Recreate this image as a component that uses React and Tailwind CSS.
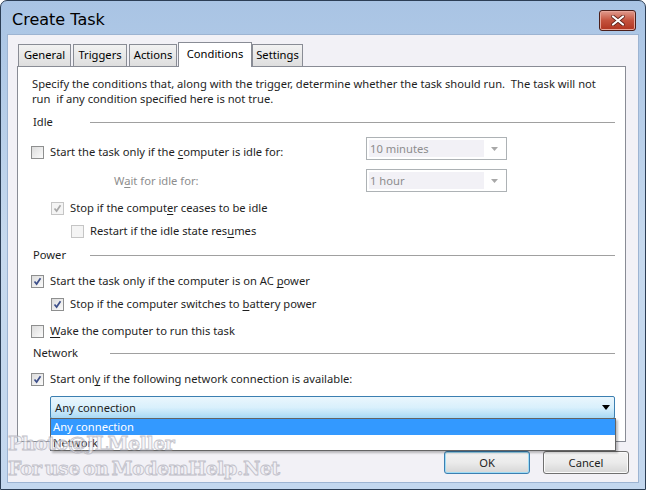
import React from 'react'

const ui = { fontFamily: '"Noto Sans", "Open Sans", sans-serif' }

function U({ children }) {
  return <span className="underline underline-offset-2">{children}</span>
}

function Check({ checked, disabled }) {
  return (
    <span className={`flex h-[13px] w-[13px] shrink-0 items-center justify-center border ${disabled ? 'border-[#c5c5c5] bg-[#f4f4f4]' : 'border-[#8e8f8f] bg-gradient-to-br from-[#dcdcdc] to-[#fbfbfb]'}`}>
      {checked && (
        <svg width="9" height="9" viewBox="0 0 9 9">
          <path d="M1.5 4.5 L3.6 7 L7.5 1.2" fill="none" stroke={disabled ? '#a8a8a8' : '#3d4f8a'} strokeWidth="1.7" />
        </svg>
      )}
    </span>
  )
}

// one checkbox line, fixed height so rows land where the dialog puts them
function Row({ indent = 'pl-[13px]', checked, disabled, children, className = '' }) {
  return (
    <div className={`flex h-[18px] shrink-0 items-center gap-[6px] ${indent} ${className}`}>
      <Check checked={checked} disabled={disabled} />
      <span className="text-[#1e1e1e]">{children}</span>
    </div>
  )
}

function Group({ title, line, className = '' }) {
  return (
    <div className={`flex h-[16px] shrink-0 items-center pl-[15px] pr-[10px] ${className}`}>
      <span className="text-[#1e1e1e]">{title}</span>
      <span className={`ml-auto h-px bg-[#a0a0a0] ${line}`} />
    </div>
  )
}

function GreySelect({ value }) {
  return (
    <div className="flex h-[23px] w-[141px] items-center border border-[#adb2b5] bg-white p-[2px]">
      <span className="flex h-full flex-1 items-center bg-[#f2f1f6] pl-[1px] text-[#8d8d8d]">{value}</span>
      <span className="flex w-[20px] justify-center">
        <svg width="7" height="4" viewBox="0 0 7 4"><path d="M0 0h7L3.5 4z" fill="#a8a8a8" /></svg>
      </span>
    </div>
  )
}

function Button({ children, primary }) {
  return (
    <button className={`flex h-[23px] w-[86px] items-center justify-center rounded-[3px] border bg-gradient-to-b from-[#f2f2f2] via-[#ebebeb] to-[#d6d6d6] text-[#1e1e1e] ${primary ? 'border-[#3c7fb1] shadow-[inset_0_0_0_1px_#9fdcf5]' : 'border-[#707070] shadow-[inset_0_0_0_1px_#fbfbfb]'}`}>
      {children}
    </button>
  )
}

const tabs = [
  { name: 'General', w: 'w-[53px] mr-[2px]' },
  { name: 'Triggers', w: 'w-[54px] mr-[2px]' },
  { name: 'Actions', w: 'w-[48px] mr-[1px]' },
  { name: 'Conditions', w: 'w-[74px]' },
  { name: 'Settings', w: 'w-[51px]' },
]

export default function App() {
  return (
    <div className="h-[490px] w-[646px] overflow-hidden bg-white text-[11.2px] leading-none" style={ui}>
      <div className="flex h-full flex-col rounded-t-[7px] border border-[#2c3e55] bg-gradient-to-b from-[#a9c4e4] via-[#c6d9ee] to-[#c3d7ee]">
        {/* title bar */}
        <div className="flex h-[33px] shrink-0 items-start pl-[11px] pr-[9px]">
          <span className="pt-[11px] text-[16px] text-black" style={{ fontFamily: '"DejaVu Sans", sans-serif' }}>Create Task</span>
          <button className="ml-auto mt-[9px] flex h-[21px] w-[37px] items-center justify-center rounded-[3px] border border-[#4b1f1a] bg-gradient-to-b from-[#e09b8e] via-[#c4523d] to-[#b0341f] shadow-[inset_0_0_0_1px_#e7a69a]">
            <svg width="14" height="11" viewBox="0 0 14 11">
              <path d="M2 1.5 L12 9.5 M12 1.5 L2 9.5" stroke="#5b2017" strokeWidth="3.6" strokeLinecap="round" />
              <path d="M2 1.5 L12 9.5 M12 1.5 L2 9.5" stroke="#fff" strokeWidth="2.2" strokeLinecap="round" />
            </svg>
          </button>
        </div>

        <div className="flex flex-1 px-[6px]">
          <div className="relative flex flex-1 flex-col border border-[#9db4d2] bg-[#f2f1f6] pl-[9px] pr-[12px] pt-[7px]">
            {/* tabs */}
            <div className="flex items-end pl-px">
              {tabs.map((t) => {
                const on = t.name === 'Conditions'
                return (
                  <div
                    key={t.name}
                    className={`flex shrink-0 items-center justify-center border border-b-0 border-[#898c95] ${t.w} ${on ? 'relative z-10 -mb-px h-[25px] bg-white pb-[3px]' : 'h-[22px] bg-gradient-to-b from-[#f2f2f2] to-[#dedede] pb-px'}`}
                  >
                    {t.name}
                  </div>
                )
              })}
            </div>

            {/* panel */}
            <div className="flex h-[376px] flex-col border border-[#898c95] bg-white pt-[9px]">
              <p className="shrink-0 pl-[14px] pr-[10px] leading-[15px] text-[#1e1e1e]">
                Specify the conditions that, along with the trigger, determine whether the task should run.&nbsp; The task will not
                <br />
                run&nbsp; if any condition specified here is not true.
              </p>

              <Group title="Idle" line="w-[525px]" className="mt-[8px]" />

              <div className="mt-[7px] flex h-[23px] shrink-0 items-start pr-[118px]">
                <Row checked={false} className="mt-[6px]">Start the task only if the <U>c</U>omputer is idle for:</Row>
                <div className="ml-auto"><GreySelect value="10 minutes" /></div>
              </div>
              <div className="mt-[9px] flex h-[23px] shrink-0 items-center pr-[118px]">
                <span className="pl-[96px] text-[#8d8d8d]">W<U>a</U>it for idle for:</span>
                <div className="ml-auto"><GreySelect value="1 hour" /></div>
              </div>

              <Row indent="pl-[33px]" checked disabled className="mt-[7px]">Stop if the comput<U>e</U>r ceases to be idle</Row>
              <Row indent="pl-[53px]" disabled className="mt-[5px]">Restart if the idle state res<U>u</U>mes</Row>

              <Group title="Power" line="w-[525px]" className="mt-[7px]" />

              <Row checked className="mt-[9px]">Start the task only if the computer is on AC <U>p</U>ower</Row>
              <Row indent="pl-[33px]" checked className="mt-[5px]">Stop if the computer switches to <U>b</U>attery power</Row>
              <Row className="mt-[9px]"><U>W</U>ake the computer to run this task</Row>

              <Group title="Network" line="w-[505px]" className="mt-[5px]" />

              <Row checked className="mt-[9px]">Start onl<U>y</U> if the following network connection is available:</Row>

              <div className="ml-[32px] mr-[10px] mt-[8px] flex h-[23px] shrink-0 items-center rounded-[2px] border border-[#3c7fb1] bg-gradient-to-b from-[#eaf6fd] via-[#d9f0fc] to-[#a7d9f5] pl-[4px] pr-[4px] text-[#1e1e1e]">
                <span>Any connection</span>
                <svg className="ml-auto" width="8" height="5" viewBox="0 0 8 5"><path d="M0 0h8L4 5z" fill="#000" /></svg>
              </div>
            </div>

            {/* open listbox */}
            <div className="absolute left-[42px] top-[383px] z-20 w-[566px] border border-[#646464] bg-white text-[#1e1e1e] shadow-[2px_2px_2px_rgba(0,0,0,0.25)]">
              <div className="flex h-[16px] items-center bg-[#3399ff] pl-[2px] text-white">Any connection</div>
              <div className="flex h-[15px] items-center pl-[2px]">Network</div>
            </div>

            {/* watermark */}
            <div className="pointer-events-none absolute left-[0px] top-[398px] z-30 flex flex-col gap-[4px] text-[19px] font-bold leading-[21px] tracking-[-0.5px] text-[#f1f0f5] opacity-70 [-webkit-text-stroke:0.8px_#a9a9b4] [word-spacing:-3px]" style={{ fontFamily: '"DejaVu Serif", serif' }}>
              <span>Photo@JLMeller</span>
              <span>For use on ModemHelp.Net</span>
            </div>

            {/* buttons */}
            <div className="-mr-[3px] mt-[9px] flex justify-end gap-[13px]">
              <Button primary>OK</Button>
              <Button>Cancel</Button>
            </div>
          </div>
        </div>
        <div className="h-[6px] shrink-0" />
      </div>
    </div>
  )
}
